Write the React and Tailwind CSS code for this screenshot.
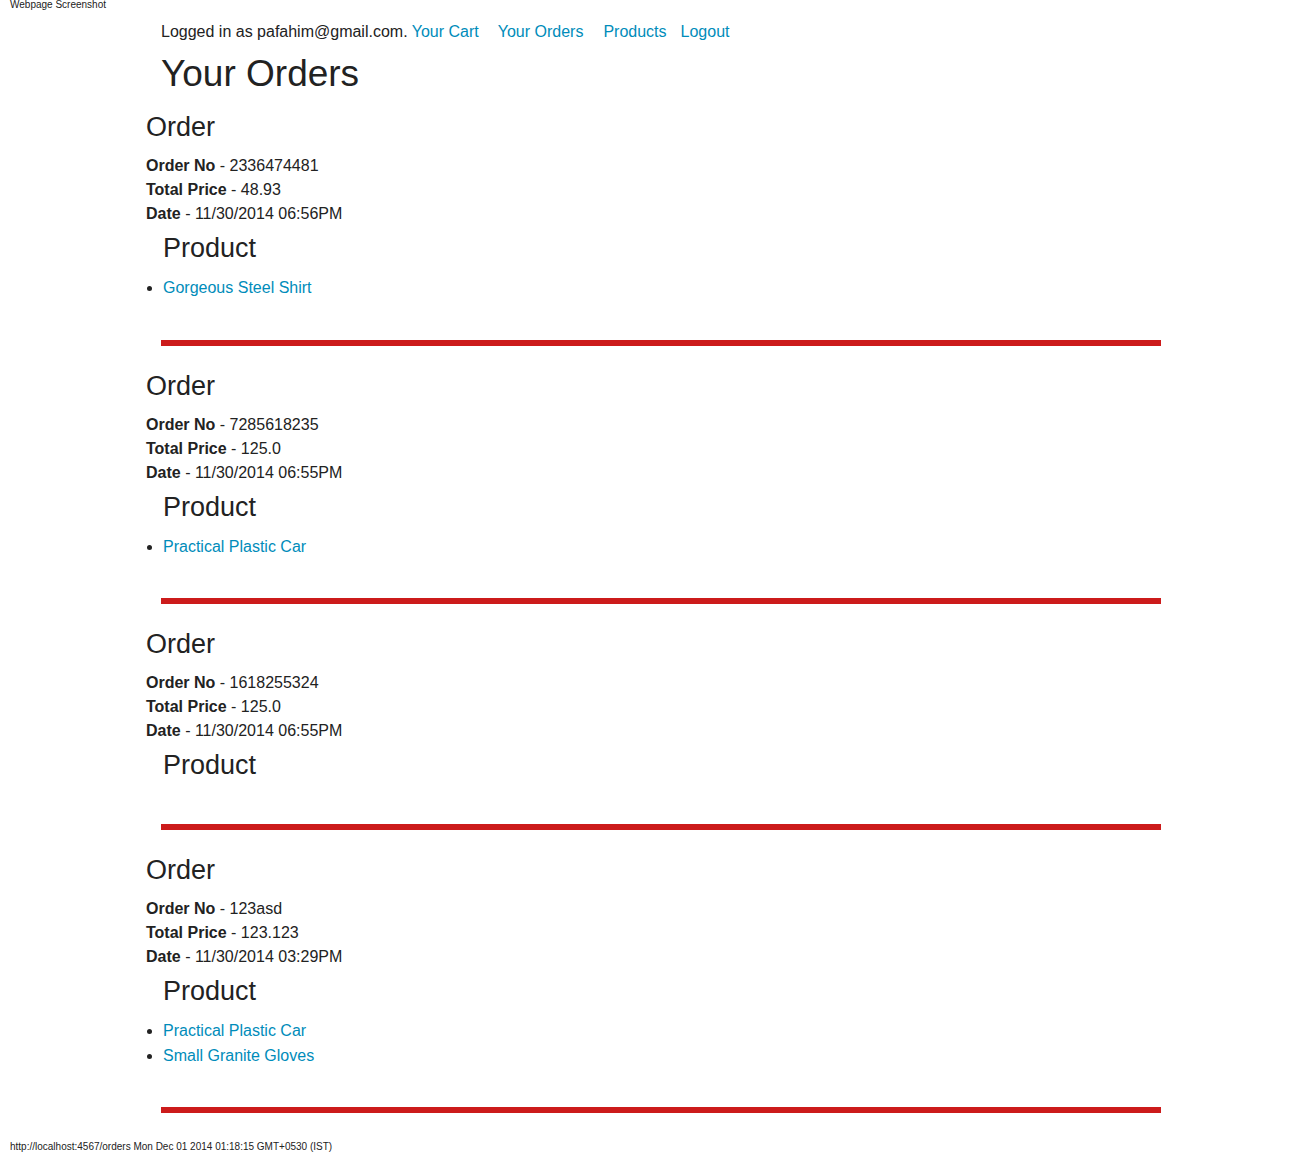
import React from 'react';

const ORDERS = [
  { no: '2336474481', price: '48.93', date: '11/30/2014 06:56PM', products: ['Gorgeous Steel Shirt'] },
  { no: '7285618235', price: '125.0', date: '11/30/2014 06:55PM', products: ['Practical Plastic Car'] },
  { no: '1618255324', price: '125.0', date: '11/30/2014 06:55PM', products: [] },
  { no: '123asd', price: '123.123', date: '11/30/2014 03:29PM', products: ['Practical Plastic Car', 'Small Granite Gloves'] },
];

const font = { fontFamily: '"Liberation Sans", Arial, sans-serif' };

function Order({ order, first }) {
  return (
    <section className={first ? 'mt-[16px]' : 'mt-[24px]'}>
      <h2 className="text-[27px] leading-[32px] font-normal text-[#222]">Order</h2>
      <div className="mt-[11px] text-[16px] leading-[24px] text-[#222]">
        <div><b>Order No</b> - {order.no}</div>
        <div><b>Total Price</b> - {order.price}</div>
        <div><b>Date</b> - {order.date}</div>
      </div>
      <h3 className="mt-[6px] ml-[17px] text-[27px] leading-[32px] font-normal text-[#222]">Product</h3>
      {order.products.length > 0 && (
        <ul className="mt-[11px] ml-[17px] list-disc text-[16px] leading-[25px]">
          {order.products.map((p, i) => (
            <li key={i}>
              <a href="#" className="text-[#008cba]">{p}</a>
            </li>
          ))}
        </ul>
      )}
      <div className={`${order.products.length > 0 ? 'mt-[39.6px]' : 'mt-[42.6px]'} ml-[15px] w-[1000px] h-[6px] bg-[#cc1b1b]`} />
    </section>
  );
}

export default function App() {
  return (
    <div className="min-h-[1152px] flex flex-col bg-white text-[#222]" style={font}>
      <div className="pl-[10px] text-[10px] leading-[10px]">Webpage Screenshot</div>

      <div className="pl-[146px]">
        <div className="mt-[10px] ml-[15px] text-[16px] leading-[24px]">
          Logged in as pafahim@gmail.com.{' '}
          <a href="#" className="text-[#008cba]">Your Cart</a>
          <a href="#" className="ml-[19px] text-[#008cba]">Your Orders</a>
          <a href="#" className="ml-[20px] text-[#008cba]">Products</a>
          <a href="#" className="ml-[14px] text-[#008cba]">Logout</a>
        </div>
        <h1 className="mt-[8px] ml-[15px] text-[37px] leading-[43px] font-normal">Your Orders</h1>

        {ORDERS.map((o, i) => (
          <Order key={i} order={o} first={i === 0} />
        ))}
      </div>

      <div className="mt-auto pl-[10px] text-[10px] leading-[11px]">
        http://localhost:4567/orders Mon Dec 01 2014 01:18:15 GMT+0530 (IST)
      </div>
    </div>
  );
}
